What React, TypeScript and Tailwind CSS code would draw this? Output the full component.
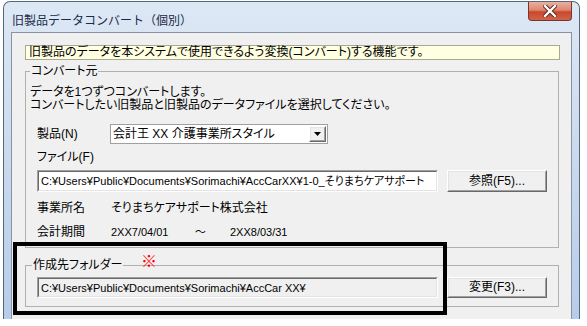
import React from "react";

function Sunken({ className, innerClass, children }: { className: string; innerClass: string; children?: React.ReactNode }) {
  return (
    <div className={"border border-t-[#a0a0a0] border-l-[#a0a0a0] border-r-white border-b-white " + className}>
      <div className={"h-full border border-t-[#696969] border-l-[#696969] border-r-[#e3e3e3] border-b-[#e3e3e3] overflow-hidden whitespace-nowrap " + innerClass}>
        {children}
      </div>
    </div>
  );
}

function Raised({ className, children }: { className: string; children?: React.ReactNode }) {
  return (
    <div className={"border border-t-white border-l-white border-r-[#696969] border-b-[#696969] " + className}>
      <div className="h-full border border-t-[#e3e3e3] border-l-[#e3e3e3] border-r-[#a0a0a0] border-b-[#a0a0a0] bg-[#f0f0f0] flex items-center justify-center">
        {children}
      </div>
    </div>
  );
}

export default function App() {
  return (
    <div className="w-[587px] h-[326px] bg-white overflow-hidden pt-[1px] font-['Liberation_Sans','Noto_Sans_CJK_JP',sans-serif] text-[12px] leading-[13px] text-black [font-feature-settings:'palt']">
      <div className="ml-[3px] w-[577px] h-[318px] rounded-t-[7px] border border-b-0 border-[#56677b] bg-[linear-gradient(180deg,#dde8f5_0%,#cddcef_40%,#b6cde9_100%)] flex flex-col">
        {/* title bar */}
        <div className="h-[30px] flex justify-between shrink-0">
          <div className="pl-[8px] pt-[11px] text-[12px] leading-[14px] text-[#1b2a47] font-['Noto_Sans_CJK_JP',sans-serif] [font-feature-settings:normal]">
            旧製品データコンバート（個別）
          </div>
          <div className="mr-[7px] w-[44px] h-[19px] rounded-b-[4px] border border-t-0 border-[#7c3427] bg-[linear-gradient(180deg,#eab1a3_0%,#dd8670_45%,#c9482d_55%,#d0634a_100%)] flex items-center justify-center">
            <svg width="14" height="12" viewBox="0 0 14 12">
              <path d="M2 1 L12 11 M12 1 L2 11" stroke="#5b1f16" strokeWidth="4.2" strokeLinecap="square" />
              <path d="M2 1 L12 11 M12 1 L2 11" stroke="#ffffff" strokeWidth="2.4" strokeLinecap="square" />
            </svg>
          </div>
        </div>

        {/* client */}
        <div className="relative mx-[7px] flex-1 border border-b-0 border-[#8793a3] bg-[#f0f0f0] flex flex-col">
          <div className="ml-[13px] mr-[11px] mt-[12px] h-[15px] border border-[#a9a894] bg-[#ffffe1] pl-[3px] leading-[13px] whitespace-nowrap">
            旧製品のデータを本システムで使用できるよう変換(コンバート)する機能です。
          </div>

          {/* group 1 */}
          <div className="relative ml-[13px] mr-[12px] mt-[11px] h-[177px] border border-[#b0b0b0] flex flex-col pl-[4px] shrink-0">
            <div className="absolute left-[4px] top-[-7px] px-[1px] bg-[#f0f0f0] leading-[13px]">コンバート元</div>
            <div className="mt-[14px] leading-[13px]">
              <div>データを1つずつコンバートします。</div>
              <div>コンバートしたい旧製品と旧製品のデータファイルを選択してください。</div>
            </div>
            <div className="mt-[12px] h-[20px] flex items-center pl-[7px]">
              <div className="w-[73px]">製品(N)</div>
              <div className="w-[218px] h-[20px] border border-[#a0a0a0] bg-white flex items-center pl-[2px] pr-[1px]">
                <div className="flex-1 whitespace-nowrap">会計王 XX 介護事業所スタイル</div>
                <Raised className="w-[17px] h-[16px]">
                  <svg width="7" height="4" viewBox="0 0 7 4"><path d="M0 0 H7 L3.5 4 Z" fill="#000" /></svg>
                </Raised>
              </div>
            </div>
            <div className="mt-[7px] pl-[7px]">ファイル(F)</div>
            <div className="mt-[6px] flex items-center pl-[7px]">
              <Sunken className="w-[401px] h-[22px] bg-white" innerClass="pl-[2px] pt-[3px] text-[11px]">
                C:¥Users¥Public¥Documents¥Sorimachi¥AccCarXX¥1-0_そりまちケアサポート
              </Sunken>
              <Raised className="ml-[9px] w-[100px] h-[22px]">参照(F5)...</Raised>
            </div>
            <div className="mt-[10px] flex pl-[7px]">
              <div className="w-[74px]">事業所名</div>
              <div>そりまちケアサポート株式会社</div>
            </div>
            <div className="mt-[11px] flex items-center pl-[7px]">
              <div className="w-[84px] shrink-0">会計期間</div>
              <div className="w-[84px] text-[11px] -ml-[10px]">2XX7/04/01</div>
              <div className="w-[35px] text-[11px]">〜</div>
              <div className="text-[11px]">2XX8/03/31</div>
            </div>
          </div>

          {/* group 2 */}
          <div className="relative ml-[13px] mr-[12px] mt-[17px] h-[42px] border border-[#b0b0b0] flex flex-col pl-[11px] shrink-0">
            <div className="absolute left-[6px] top-[-7px] px-[1px] bg-[#f0f0f0] leading-[13px]">作成先フォルダー</div>
            <div className="mt-[11px] flex items-center">
              <Sunken className="w-[401px] h-[21px] bg-[#f0f0f0]" innerClass="pl-[2px] pt-[3px] text-[11px]">
                C:¥Users¥Public¥Documents¥Sorimachi¥AccCar XX¥
              </Sunken>
              <Raised className="ml-[9px] w-[100px] h-[21px]">変更(F3)...</Raised>
            </div>
          </div>

          {/* annotation overlays */}
          <div className="absolute left-[1px] top-[209px] w-[434px] h-[73px] border-[4px] border-black" />
          <div className="absolute left-[129px] top-[219px] text-[16px] leading-[16px] font-bold text-[#ff0000] font-['Noto_Sans_CJK_JP',sans-serif]">※</div>
        </div>
      </div>
    </div>
  );
}
